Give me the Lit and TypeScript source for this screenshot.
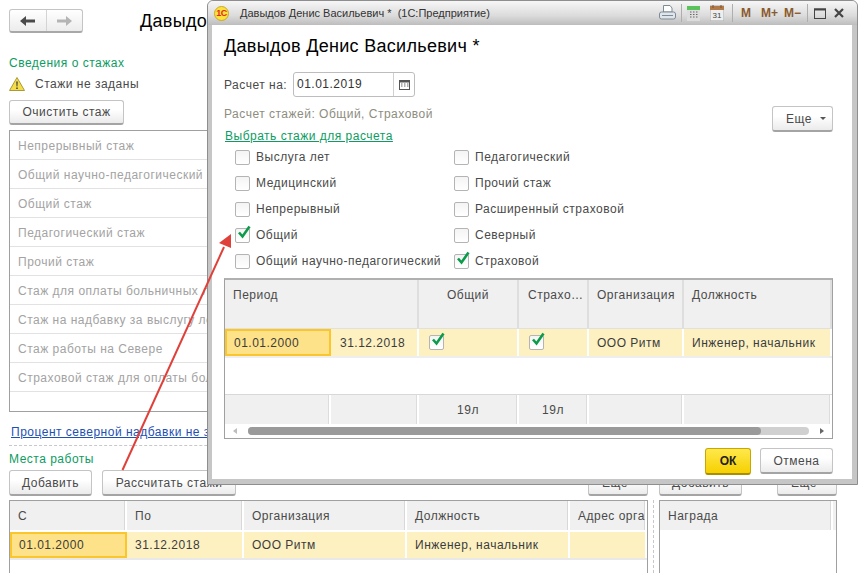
import { LitElement, html, css, svg } from "lit";
import { customElement } from "lit/decorators.js";

const check = svg`<path d="M3 7.5 L6.5 11.5 L13.5 1.5" fill="none" stroke="#0b9b4a" stroke-width="2.6"/>`;

@customElement("app-root")
export class AppRoot extends LitElement {
  static styles = css`
    :host {
      display: block;
      position: relative;
      width: 858px;
      height: 573px;
      overflow: hidden;
      background: #fff;
      font-family: "Liberation Sans", Arial, sans-serif;
      font-size: 12px;
      letter-spacing: 0.5px;
      color: #4a4a4a;
    }
    * { box-sizing: border-box; }
    .page { display: flex; flex-direction: column; padding: 9px 0 0 9px; width: 858px; height: 573px; }
    .nav { display: flex; align-items: center; height: 24px; }
    .navgroup {
      display: flex; width: 74px; height: 24px; border: 1px solid #c4c4c4; border-bottom: 2px solid #a8a8a8;
      border-radius: 3px; background: linear-gradient(#fff, #ececec);
    }
    .navgroup span { flex: 1; display: flex; align-items: center; justify-content: center; }
    .navgroup span + span { border-left: 1px solid #d4d4d4; }
    .title { margin-left: 57px; font-size: 18px; letter-spacing: 0.3px; color: #000; white-space: nowrap; }
    .green { color: #0d9c62; }
    .sec1 { margin-top: 23px; height: 14px; line-height: 14px; }
    .warn { display: flex; align-items: center; gap: 10px; height: 16px; margin-top: 6px; }
    .btn {
      display: flex; align-items: center; justify-content: center; height: 26px; white-space: nowrap;
      border: 1px solid #c4c4c4; border-bottom: 2px solid #a4a4a4; border-radius: 3px;
      background: linear-gradient(#fff 40%, #ebebeb); color: #4a4a4a;
    }
    .clear { width: 115px; margin-top: 8px; height: 25px; }
    .list {
      width: 639px; height: 282px; margin-top: 5px; border: 1px solid #a0a0a0; color: #a3a3a3;
    }
    .list div { height: 29px; line-height: 30px; padding-left: 8px; border-bottom: 1px solid #e2e2e2; white-space: nowrap; }
    .percent { margin: 13px 0 0 2px; height: 14px; line-height: 14px; color: #1e50b4; text-decoration: underline; white-space: nowrap; }
    .dash { width: 639px; margin-top: 6px; border-top: 1px dashed #c8c8c8; }
    .places { margin-top: 6px; height: 14px; line-height: 14px; }
    .split { display: flex; margin-top: 4px; flex: 1; min-height: 0; }
    .left { width: 639px; display: flex; flex-direction: column; }
    .sash { width: 11px; position: relative; }
    .sash::after { content: ""; position: absolute; left: 5px; top: 30px; bottom: 0; border-left: 1px dashed #c8c8c8; }
    .right { width: 178px; display: flex; flex-direction: column; }
    .bar { display: flex; gap: 10px; height: 26px; }
    .bar .more { margin-left: auto; width: 60px; }
    .add { width: 83px; }
    .calc { width: 134px; }
    .btn.more { justify-content: flex-start; padding-left: 13px; }
    .more-inner { display: flex; align-items: center; gap: 8px; }
    .caret { width: 0; height: 0; border: 3px solid transparent; border-top: 3px solid #555; border-bottom: 0; }
    .grid {
      margin-top: 4px; flex: 1; border: 1px solid #a0a0a0; border-bottom: 0; overflow: hidden;
    }
    .row { display: flex; }
    .grid .head { height: 31px; background: #f0f0f0; border-bottom: 2px solid #fff; }
    .cell { display: flex; align-items: center; padding-left: 8px; flex: none; border-right: 2px solid #fff; white-space: nowrap; overflow: hidden; }
    .grid .head .cell { border-right: 2px solid #fff; box-shadow: inset -1px 0 0 #d8d8d8; }
    .grid .data { height: 28px; background: #fdf1c2; border-bottom: 2px solid #e9e9e9; color: #3c3c3c; }
    .grid .data .cell { height: 26px; }
    .sel { background: #fee28a; border: 2px solid #fbc62c !important; padding-left: 7px !important; color: #3c3c3c; }

    .dialog {
      position: absolute; left: 207px; top: 0; width: 651px; height: 485px;
      border: 1px solid #8e8e8e; border-radius: 6px 6px 0 0;
      background: #c6c6c6; display: flex; flex-direction: column; padding: 0 5px 5px 4px;
    }
    .tbar {
      display: flex; align-items: center; height: 24px; margin: 0 -5px 0 -4px; padding-left: 6px; flex: none;
      background: linear-gradient(#f6f6f6, #dcdcdc 60%, #bdbdbd); border-radius: 5px 5px 0 0;
      font-size: 11px; letter-spacing: 0; color: #333; position: relative;
    }
    .logo { width: 15px; height: 15px; border-radius: 50%; background: #fde13d; border: 1px solid #c9a92a; color: #e02a20; font-size: 9px; font-weight: bold; letter-spacing: -0.5px; display: flex; align-items: center; justify-content: center; flex: none; }
    .ttext { margin-left: 11px; white-space: nowrap; }
    .ticons { margin-left: auto; display: flex; align-items: center; height: 24px; }
    .mem { color: #8a5a2e; font-weight: bold; font-size: 12px; letter-spacing: 0; }
    .tsep { width: 1px; height: 18px; background: #aeaeae; }
    .body { flex: 1; background: #fff; padding: 0 0 0 12px; display: flex; flex-direction: column; min-height: 0; }
    .dhead { margin-top: 11px; height: 21px; line-height: 21px; font-size: 18px; letter-spacing: 0.3px; color: #000; white-space: nowrap; }
    .date { display: flex; align-items: center; margin-top: 15px; height: 25px; }
    .date .lbl { width: 69px; white-space: nowrap; }
    .field { display: flex; width: 122px; height: 25px; border: 1px solid #bdbdbd; border-radius: 3px; align-items: stretch; }
    .field .v { flex: 1; padding-left: 3px; line-height: 23px; color: #333; }
    .field .c { width: 21px; border-left: 1px solid #d0d0d0; display: flex; align-items: center; justify-content: center; }
    .calcline { display: flex; align-items: flex-start; height: 25px; margin-top: 9px; color: #8d8d80; padding-right: 19px; white-space: nowrap; }
    .calcline > span { margin-top: 1px; }
    .calcline .btn { margin-left: auto; width: 61px; }
    .pick { margin: -2px 0 0 1px; height: 14px; line-height: 14px; color: #0d9c62; text-decoration: underline; white-space: nowrap; }
    .checks { display: grid; grid-template-columns: 219px 1fr; grid-auto-rows: 26px; margin: 1px 0 0 11px; }
    .ck { display: flex; align-items: center; gap: 6px; white-space: nowrap; }
    .box { width: 15px; height: 15px; border: 1px solid #b4b4b4; border-radius: 2px; background: linear-gradient(#f4f4f4, #fff); flex: none; position: relative; }
    .box svg { position: absolute; left: 0; top: -4px; overflow: visible; }
    .dgrid { flex: none; width: 609px; height: 161px; margin-top: 4px; border: 1px solid #a0a0a0; border-top-width: 2px; border-color: #b0b0b0 #a0a0a0 #a0a0a0; display: flex; flex-direction: column; }
    .dgrid .head { height: 48px; background: #f0f0f0; align-items: flex-start; }
    .dgrid .head .cell { height: 100%; border-right: 2px solid #dedede; align-items: flex-start; padding-top: 8px; }
    .dgrid .data { height: 30px; background: #fdf1c2; border-top: 1px solid #e0e0e0; border-bottom: 2px solid #eeeeee; color: #3c3c3c; }
    .dgrid .data .cell { height: 27px; border-right: 2px solid #fff; }
    .blank { height: 37px; border-bottom: 1px solid #d8d8d8; }
    .foot { height: 29px; background: #f0f0f0; }
    .foot .cell { height: 100%; justify-content: center; padding: 0; border-right: 2px solid #fff; box-shadow: inset -1px 0 0 #dcdcdc; }
    .head .center { justify-content: center; padding-left: 0; }
    .scroll { flex: 1; display: flex; align-items: center; padding: 0 8px 0 8px; gap: 11px; }
    .track { flex: 1; height: 8px; background: #d0d0d0; border-radius: 4px; }
    .thumb { width: 513px; height: 8px; background: #9a9a9a; border-radius: 4px; }
    .tri { width: 0; height: 0; border: 3px solid transparent; flex: none; }
    .tl { border-right: 4px solid #bdbdbd; border-left: 0; }
    .tr { border-left: 4px solid #666; border-right: 0; }
    .actions { display: flex; justify-content: flex-end; align-items: flex-start; gap: 9px; margin-top: 9px; padding-right: 19px; }
    .ok { width: 46px; height: 27px; background: linear-gradient(#ffe84d, #f6d000); border: 1px solid #c8a800; border-bottom: 2px solid #a88e00; color: #222; font-weight: bold; letter-spacing: 0; }
    .cancel { width: 73px; height: 26px; }
    .arrow { position: absolute; left: 0; top: 0; pointer-events: none; }
  `;

  private gridCells(cols: [string, number, string?][], cls: string) {
    return html`<div class="row ${cls}">${cols.map(([t, w, c]) =>
      html`<div class="cell ${c ?? ""}" style="width:${w}px">${t}</div>`)}</div>`;
  }

  private ck(label: string, on = false) {
    return html`<label class="ck"><span class="box">${on ? html`<svg width="15" height="15" viewBox="0 0 15 15">${check}</svg>` : ""}</span>${label}</label>`;
  }

  private moreBtn() {
    return html`<div class="btn more"><span class="more-inner">Еще<span class="caret"></span></span></div>`;
  }

  render() {
    const stazh = ["Непрерывный стаж", "Общий научно-педагогический стаж", "Общий стаж", "Педагогический стаж", "Прочий стаж",
      "Стаж для оплаты больничных листов", "Стаж на надбавку за выслугу лет", "Стаж работы на Севере", "Страховой стаж для оплаты больничных"];
    return html`
      <div class="page">
        <div class="nav">
          <div class="navgroup">
            <span><svg width="15" height="10" viewBox="0 0 15 10"><path d="M0 5 L6 0 V3.5 H15 V6.5 H6 V10 Z" fill="#4a4a4a"/></svg></span>
            <span><svg width="15" height="10" viewBox="0 0 15 10"><path d="M15 5 L9 0 V3.5 H0 V6.5 H9 V10 Z" fill="#b4b4b4"/></svg></span>
          </div>
          <div class="title">Давыдов Денис Васильевич</div>
        </div>
        <div class="sec1 green">Сведения о стажах</div>
        <div class="warn">
          <svg width="16" height="14" viewBox="0 0 16 14"><path d="M8 .5 L15.5 13.5 H.5 Z" fill="#f5dc4a" stroke="#a89a3a"/><path d="M7.3 4.5 H8.7 L8.4 9.5 H7.6 Z M7.3 10.5 H8.7 V12 H7.3 Z" fill="#333"/></svg>
          <span>Стажи не заданы</span>
        </div>
        <div class="btn clear">Очистить стаж</div>
        <div class="list">${stazh.map((s) => html`<div>${s}</div>`)}</div>
        <div class="percent">Процент северной надбавки не задан</div>
        <div class="dash"></div>
        <div class="places green">Места работы</div>
        <div class="split">
          <div class="left">
            <div class="bar"><div class="btn add">Добавить</div><div class="btn calc">Рассчитать стажи</div>${this.moreBtn()}</div>
            <div class="grid">
              ${this.gridCells([["С", 117], ["По", 117], ["Организация", 163], ["Должность", 163], ["Адрес организации", 77]], "head")}
              ${this.gridCells([["01.01.2000", 117, "sel"], ["31.12.2018", 117], ["ООО Ритм", 163], ["Инженер, начальник", 163], ["", 77]], "data")}
            </div>
          </div>
          <div class="sash"></div>
          <div class="right">
            <div class="bar"><div class="btn add">Добавить</div>${this.moreBtn()}</div>
            <div class="grid">${this.gridCells([["Награда", 173]], "head")}</div>
          </div>
        </div>
      </div>

      <div class="dialog">
        <div class="tbar">
          <span class="logo">1С</span>
          <span class="ttext">Давыдов Денис Васильевич *&nbsp; (1С:Предприятие)</span>
          <div class="ticons">
            <svg width="17" height="16" viewBox="0 0 17 16"><path d="M4.5 .5 H11 L13 3 V7 H4.5 Z" fill="#fff" stroke="#7d8b96"/><rect x=".5" y="7" width="16" height="7" rx="2" fill="#dfe5ea" stroke="#7d8b96"/><path d="M3 10.5 H14" stroke="#7d8b96"/></svg>
            <span class="tsep" style="margin:0 5px 0 5px"></span>
            <svg width="13" height="15" viewBox="0 0 13 15"><rect width="13" height="15" fill="#ddd"/><rect width="13" height="4" fill="#5cc25c"/><path d="M3 6h1.5M6 6h1.5M9 6h1.5M3 8.500h1.500M6 8.500h1.500M9 8.500h1.500M3 11h1.500M6 11h1.500M9 11h1.500" stroke="#666"/></svg>
            <svg style="margin-left:10px" width="14" height="16" viewBox="0 0 14 16"><rect y="1" width="14" height="15" fill="#eee" stroke="#a8a8a8"/><rect y="1" width="14" height="4" fill="#b07a4a"/><path d="M3 0v3M11 0v3" stroke="#7a5230"/><text x="7" y="13" font-size="8" text-anchor="middle" fill="#444" font-family="Liberation Sans">31</text></svg>
            <span class="tsep" style="margin:0 8px"></span>
            <span class="mem">M</span>
            <span class="mem" style="margin-left:10px">M+</span>
            <span class="mem" style="margin-left:6px">M−</span>
            <span class="tsep" style="margin:0 6px 0 6px"></span>
            <svg width="12" height="11" viewBox="0 0 12 11"><rect x=".5" y="1" width="11" height="9.500" fill="none" stroke="#444"/><path d="M0 1.500H12" stroke="#444" stroke-width="2"/></svg>
            <svg style="margin:0 13px 0 8px" width="10" height="10" viewBox="0 0 10 10"><path d="M1 1 L9 9 M9 1 L1 9" stroke="#444" stroke-width="2.200"/></svg>
          </div>
        </div>
        <div class="body">
          <div class="dhead">Давыдов Денис Васильевич *</div>
          <div class="date">
            <span class="lbl">Расчет на:</span>
            <div class="field">
              <span class="v">01.01.2019</span>
              <span class="c"><svg width="11" height="11" viewBox="0 0 11 11"><rect x=".5" y="1.500" width="10" height="9" fill="none" stroke="#555"/><path d="M0 2.500H11" stroke="#555" stroke-width="2"/><path d="M2 5h1.500M5 5h1.500M8 5h1.500M2 7h1.500M5 7h1.500M8 7h1.500" stroke="#666"/></svg></span>
            </div>
          </div>
          <div class="calcline"><span>Расчет стажей: Общий, Страховой</span>${this.moreBtn()}</div>
          <div class="pick">Выбрать стажи для расчета</div>
          <div class="checks">
            ${this.ck("Выслуга лет")}${this.ck("Педагогический")}
            ${this.ck("Медицинский")}${this.ck("Прочий стаж")}
            ${this.ck("Непрерывный")}${this.ck("Расширенный страховой")}
            ${this.ck("Общий", true)}${this.ck("Северный")}
            ${this.ck("Общий научно-педагогический")}${this.ck("Страховой", true)}
          </div>
          <div class="dgrid">
            <div class="row head">
              <div class="cell" style="width:194px">Период</div>
              <div class="cell center" style="width:100px">Общий</div>
              <div class="cell" style="width:70px;padding-left:9px">Страхо…</div>
              <div class="cell" style="width:95px">Организация</div>
              <div class="cell" style="width:148px">Должность</div>
            </div>
            <div class="row data">
              <div class="cell sel" style="width:106px">01.01.2000</div>
              <div class="cell" style="width:88px;padding-left:9px">31.12.2018</div>
              <div class="cell" style="width:100px;padding-left:10px"><span class="box"><svg width="15" height="15" viewBox="0 0 15 15">${check}</svg></span></div>
              <div class="cell" style="width:70px;padding-left:10px"><span class="box"><svg width="15" height="15" viewBox="0 0 15 15">${check}</svg></span></div>
              <div class="cell" style="width:95px">ООО Ритм</div>
              <div class="cell" style="width:148px">Инженер, начальник</div>
            </div>
            <div class="blank"></div>
            <div class="row foot">
              <div class="cell" style="width:106px"></div>
              <div class="cell" style="width:88px"></div>
              <div class="cell" style="width:100px">19л</div>
              <div class="cell" style="width:70px">19л</div>
              <div class="cell" style="width:95px"></div>
              <div class="cell" style="width:148px"></div>
            </div>
            <div class="scroll">
              <span class="tri tl"></span>
              <div class="track"><div class="thumb"></div></div>
              <span class="tri tr"></span>
            </div>
          </div>
          <div class="actions">
            <div class="btn ok">ОК</div>
            <div class="btn cancel">Отмена</div>
          </div>
        </div>
      </div>

      <svg class="arrow" width="858" height="573" viewBox="0 0 858 573">
        <path d="M122.500 470 L224 247" stroke="#e0403a" stroke-width="2" fill="none"/>
        <path d="M231 234 L231 248 L219 243 Z" fill="#e0403a"/>
      </svg>
    `;
  }
}
